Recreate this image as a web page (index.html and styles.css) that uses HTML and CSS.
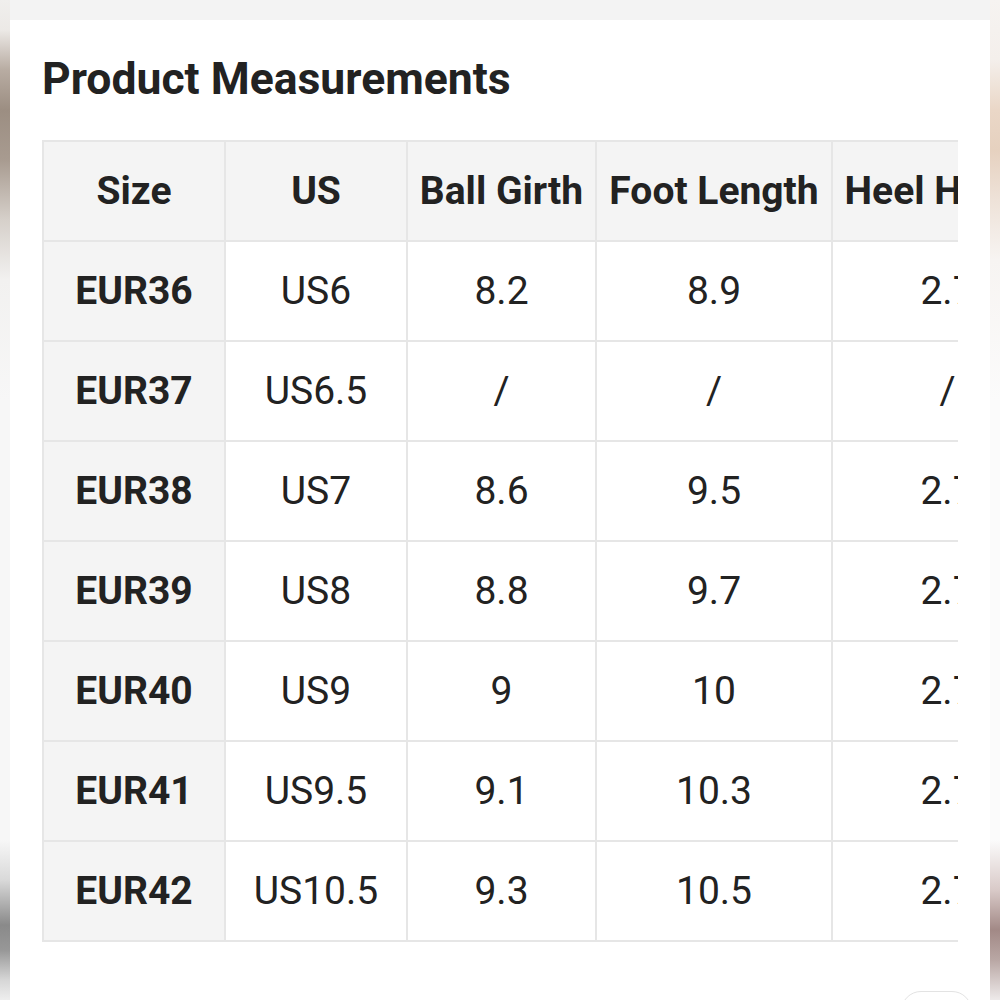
FILE: index.html
```html
<!DOCTYPE html>
<html lang="en">
<head>
<meta charset="utf-8">
<title>Product Measurements</title>
<link rel="stylesheet" href="styles.css">
</head>
<body>
<div class="frame">
  <div class="edge edge-left"></div>
  <main class="sheet">
    <div class="topbar"></div>
    <section class="card">
      <h1 class="title">Product Measurements</h1>
      <div class="scroller">
        <table class="sizes">
          <colgroup>
            <col class="c-size"><col class="c-us"><col class="c-ball"><col class="c-foot"><col class="c-heel">
          </colgroup>
          <thead>
            <tr><th>Size</th><th>US</th><th>Ball Girth</th><th>Foot Length</th><th>Heel Height</th></tr>
          </thead>
          <tbody>
            <tr><th>EUR36</th><td>US6</td><td>8.2</td><td>8.9</td><td>2.7</td></tr>
            <tr><th>EUR37</th><td>US6.5</td><td>/</td><td>/</td><td>/</td></tr>
            <tr><th>EUR38</th><td>US7</td><td>8.6</td><td>9.5</td><td>2.7</td></tr>
            <tr><th>EUR39</th><td>US8</td><td>8.8</td><td>9.7</td><td>2.7</td></tr>
            <tr><th>EUR40</th><td>US9</td><td>9</td><td>10</td><td>2.7</td></tr>
            <tr><th>EUR41</th><td>US9.5</td><td>9.1</td><td>10.3</td><td>2.7</td></tr>
            <tr><th>EUR42</th><td>US10.5</td><td>9.3</td><td>10.5</td><td>2.7</td></tr>
          </tbody>
        </table>
      </div>
      <div class="actions"><button class="pill" type="button"></button></div>
    </section>
  </main>
  <div class="edge edge-right"></div>
</div>
</body>
</html>
```

FILE: styles.css
```css
html, body {
  margin: 0;
  padding: 0;
  height: 1000px;
  overflow: hidden;
  background: #ffffff;
}

body {
  font-family: Roboto, "Liberation Sans", Arial, sans-serif;
  color: #222222;
}

.frame {
  display: flex;
  width: 1000px;
  height: 1000px;
}

.edge {
  width: 10px;
  flex: 0 0 10px;
  height: 1000px;
}

.edge-left {
  background: linear-gradient(to bottom,
    #f0efed 0px,
    #ece9e6 30px,
    #b8aca2 70px,
    #9c8e82 110px,
    #a89b90 160px,
    #d6d0ca 220px,
    #f2f1f0 280px,
    #f7f7f7 400px,
    #f7f7f7 840px,
    #d9d9d9 880px,
    #8a8a8a 925px,
    #979797 950px,
    #d6d6d6 980px,
    #eeeeee 1000px);
}

.edge-right {
  background: linear-gradient(to bottom,
    #f6f3f1 0px,
    #f4efeb 60px,
    #ead7c7 110px,
    #e6d1bf 150px,
    #eee2d8 200px,
    #f7f4f2 260px,
    #fbfbfb 400px,
    #fbfbfb 840px,
    #d9cac8 890px,
    #a28986 930px,
    #b9a7a4 960px,
    #eeeaea 1000px);
}

.sheet {
  flex: 1 1 auto;
  display: flex;
  flex-direction: column;
  background: #ffffff;
  min-width: 0;
}

.topbar {
  height: 20px;
  flex: 0 0 20px;
  background: #f3f3f3;
}

.card {
  padding: 33px 0 0 32px;
  display: flex;
  flex-direction: column;
}

.title {
  margin: 0;
  font-size: 44.5px;
  line-height: 53px;
  font-weight: 700;
  color: #222222;
}

.scroller {
  margin-top: 34px;
  width: 916px;
  overflow: hidden;
}

.sizes {
  border-collapse: collapse;
  table-layout: fixed;
  width: 1020px;
}

.c-size { width: 182px; }
.c-us { width: 182px; }
.c-ball { width: 189px; }
.c-foot { width: 236px; }
.c-heel { width: 231px; }

.sizes th,
.sizes td {
  border: 2px solid #e6e6e6;
  height: 98px;
  padding: 0;
  text-align: center;
  vertical-align: middle;
  font-size: 39px;
  line-height: 44px;
  white-space: nowrap;
  overflow: hidden;
  color: #222222;
}

.sizes th {
  font-weight: 700;
  background: #f4f4f4;
}

.sizes td {
  font-weight: 400;
  background: #ffffff;
}

.actions {
  display: flex;
  justify-content: flex-end;
  padding-right: 18px;
  margin-top: 49px;
}

.pill {
  width: 71px;
  height: 40px;
  border: 1.5px solid #e3e3e3;
  border-radius: 20px;
  background: #ffffff;
  padding: 0;
}
```
